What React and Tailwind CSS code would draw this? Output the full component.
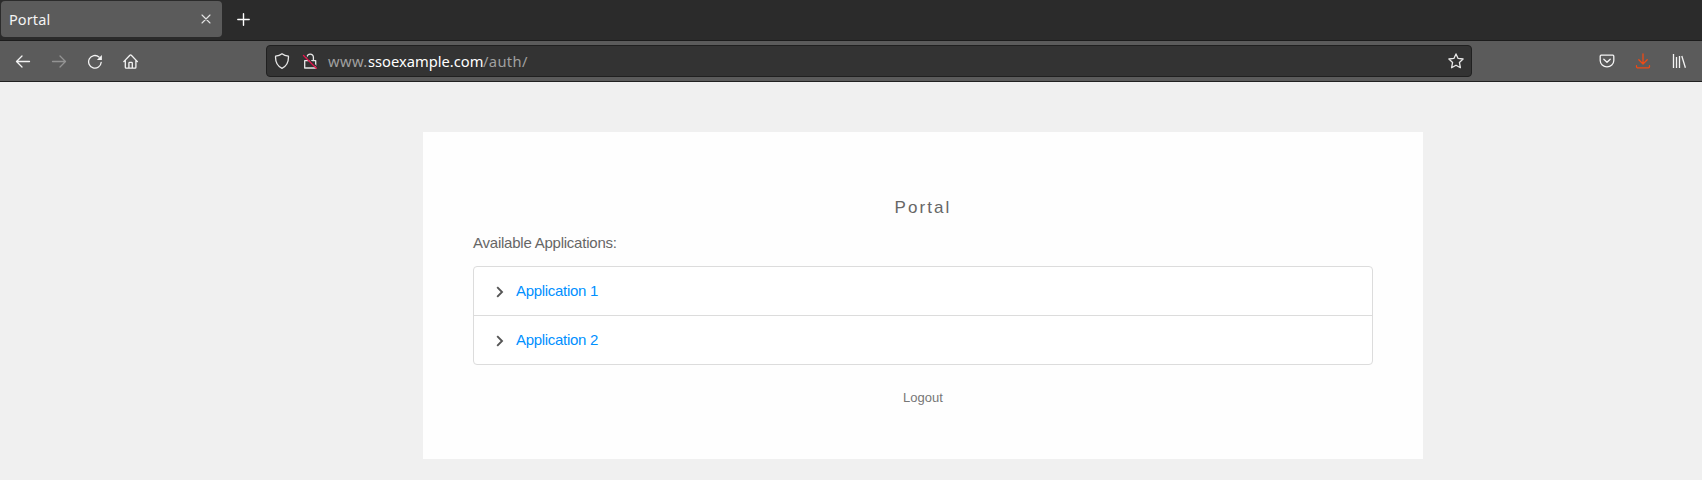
import React from "react";

function Icon({ className = "", children, w = 16, h = 16 }) {
  return (
    <svg
      className={`block shrink-0 ${className}`}
      width={w}
      height={h}
      viewBox={`0 0 ${w} ${h}`}
      fill="none"
      stroke="currentColor"
      strokeWidth="1.3"
      strokeLinecap="round"
      strokeLinejoin="round"
    >
      {children}
    </svg>
  );
}

function TabBar() {
  return (
    <div className="flex h-[41px] border-b border-[#1c1c1c] bg-[#2b2b2b] pt-px pl-px">
      <div className="flex h-9 w-[221px] items-center justify-between rounded-[4px] bg-[#5b5b5b] pr-[11px] pl-2">
        <span className="text-[14.500px] leading-5 tracking-[0.1px] text-[#f4f4f4]">Portal</span>
        <Icon w={10} h={10} className="text-[#e4e4e4]">
          <path d="M1 1l8 8M9 1l-8 8" strokeWidth="1.1" />
        </Icon>
      </div>
      <Icon w={13} h={13} className="mt-3 ml-[15px] text-white">
        <path d="M6.5 .8v11.400M.8 6.500h11.400" strokeWidth="1.4" />
      </Icon>
    </div>
  );
}

function NavBar() {
  return (
    <div className="flex h-[41px] items-center border-b border-[#202020] bg-[#5b5b5b] pr-[15px] pl-[15px] text-[#f4f4f4]">
      <div className="flex w-[251px] items-center gap-5">
        <Icon>
          <path d="M14.5 8.500H1.8M7 3L1.5 8.500 7 14" />
        </Icon>
        <Icon className="text-[#939393]">
          <path d="M1.5 8.500h12.7M9 3L14.5 8.500 9 14" />
        </Icon>
        <Icon>
          <path d="M14.2 9.300A6.3 6.3 0 1 1 12 4" />
          <path d="M14.9 1.900v5h-5z" fill="currentColor" stroke="none" />
        </Icon>
        <Icon>
          <path d="M.8 8.6L6.900 2.2q.7-.6 1.4 0l6.1 6.4M2.300 7.400v6.8q0 .9.9.9h8.8q.9 0 .9-.9V7.400M5.900 14.900V10.200q0-.8.8-.8h1.8q.8 0 .8.8v4.7" />
        </Icon>
      </div>
      <div className="flex h-8 w-[1206px] items-center rounded-[4px] border border-[#202020] bg-[#333333] pr-[7px] pl-[7px]">
        <Icon className="text-[#e8e8e8]">
          <path d="M8 .8C6.2 2.2 4 2.9 1.6 3.1C1.2 8.600 3 13 8 15.300C13 13 14.800 8.600 14.400 3.100C12 2.900 9.800 2.200 8 .8z" />
        </Icon>
        <Icon className="ml-3 text-[#e8e8e8]">
          <path d="M2.700 7.700h11v7.300h-11zM5 4.300a3.200 3.200 0 0 1 6.400 0v3.200" />
          <path d="M2.700 1.900l12.500 12.400" className="stroke-[#333333]" />
          <path d="M1.500 2.500l12.800 12.800" className="stroke-[#e8124c]" />
        </Icon>
        <div className="ml-[10px] flex text-[14.700px] leading-5 text-[#a0a0a0]">
          <span className="w-[40px] tracking-[0.4px]">www.</span>
          <span className="w-[115px] text-white">ssoexample.com</span>
          <span className="tracking-[0.35px]">/auth/</span>
        </div>
        <Icon className="ml-auto text-[#e8e8e8]">
          <path d="M8 .9l2.100 4.500 5 .6-3.700 3.400 1 5.300L8 12.200l-4.400 2.500 1-5.300L.9 6l5-.6z" />
        </Icon>
      </div>
      <div className="ml-auto flex items-center gap-5">
        <Icon>
          <path d="M2.200 2.200h11.600q1 0 1 1v4.300a6.800 6.300 0 0 1-13.600 0V3.200q0-1 1-1z" />
          <path d="M4.800 6.200L8 9.300l3.200-3.100" />
        </Icon>
        <Icon className="text-[#f04a14]">
          <path d="M8 .8v10M3.800 6.800L8 11l4.200-4.200M1.500 12.700v1.100q0 1 1 1h11q1 0 1-1v-1.100" />
        </Icon>
        <Icon>
          <path d="M2.500 1v14M5.500 4v11M8.500 3v12M10.800 3l3.600 11.800" strokeLinecap="butt" />
        </Icon>
      </div>
    </div>
  );
}

function ApplicationRow({ name }) {
  return (
    <li className="box-content flex h-12 items-center pl-[22px]">
      <svg
        className="mt-[2px] block"
        width="8"
        height="12"
        viewBox="0 0 8 12"
        fill="none"
        stroke="#555555"
        strokeWidth="1.9"
      >
        <path d="M1.200 1.200L6 6l-4.800 4.800" />
      </svg>
      <a href="#" className="ml-3 text-[15px] leading-6 tracking-[-0.3px] text-[#0090ff]">
        {name}
      </a>
    </li>
  );
}

export default function App() {
  return (
    <div className="h-[480px] w-full overflow-hidden bg-[#f0f0f0] font-['Noto_Sans',sans-serif]">
      <TabBar />
      <NavBar />
      <main className="mt-[50px] ml-[423px] flex h-[327px] w-[1000px] flex-col bg-[#fefefe] px-[50px] pt-[63px] font-['Liberation_Sans',sans-serif] text-[#666666]">
        <h1 className="text-center text-[17px] leading-[26px] tracking-[2.1px]">Portal</h1>
        <p className="mt-[10px] text-[15px] leading-6 tracking-[-0.230px]">Available Applications:</p>
        <ul className="mt-[11px] divide-y divide-[#dcdcdc] rounded-[4px] border border-[#dcdcdc] bg-white">
          <ApplicationRow name="Application 1" />
          <ApplicationRow name="Application 2" />
        </ul>
        <a href="#" className="mt-[23px] text-center text-[13px] leading-5 text-[#777777]">
          Logout
        </a>
      </main>
    </div>
  );
}
